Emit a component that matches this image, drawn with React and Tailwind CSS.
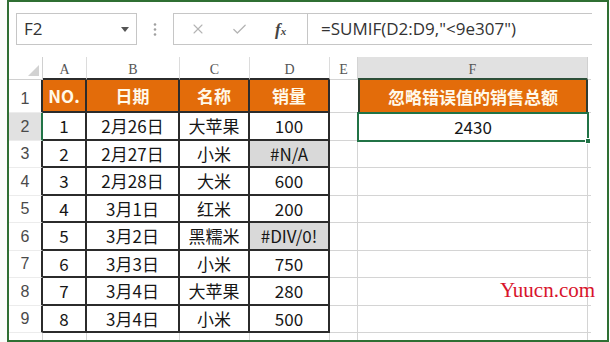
import React from "react";
import { X, Check } from "lucide-react";

const CJK = { fontFamily: '"Noto Sans CJK SC", "Noto Sans", sans-serif' };

const data = [
  ["1", "2月26日", "大苹果", "100"],
  ["2", "2月27日", "小米", "#N/A"],
  ["3", "2月28日", "大米", "600"],
  ["4", "3月1日", "红米", "200"],
  ["5", "3月2日", "黑糯米", "#DIV/0!"],
  ["6", "3月3日", "小米", "750"],
  ["7", "3月4日", "大苹果", "280"],
  ["8", "3月4日", "小米", "500"],
];

function RowNum({ n, selected }) {
  return (
    <div
      className={`flex items-end justify-center pb-[1px] border-r-2 border-b border-b-[#ececec] text-[16px] text-[#4a4a4a] ${
        selected ? "bg-[#e1e1e1] border-r-[#217346]" : "bg-white border-r-[#2b2b2b]"
      }`}
      style={{ fontFamily: '"Liberation Sans", sans-serif' }}
    >
      {n}
    </div>
  );
}

function Cell({ children, gray }) {
  return (
    <div
      className={`flex items-center justify-center border-r-2 border-b-2 border-[#2b2b2b] text-[17px] text-[#161616] ${
        gray ? "bg-[#d9d9d9]" : "bg-white"
      }`}
    >
      {children}
    </div>
  );
}

function ColHead({ children, className = "" }) {
  return (
    <div
      className={`flex items-center justify-center pt-[3px] text-[14px] text-[#555] ${className}`}
      style={{ fontFamily: '"Liberation Serif", serif' }}
    >
      {children}
    </div>
  );
}

export default function App() {
  return (
    <div className="relative w-[610px] h-[342px] bg-[#fbfdfb] overflow-hidden" style={CJK}>
      <div className="ml-[7px] w-[602px] h-[342px] border-2 border-[#2f6f33] bg-white">
        {/* formula bar */}
        <div className="flex items-center mt-[11px] ml-[7px] mr-[15px] h-[32px]">
          <div className="flex items-center justify-between w-[121px] h-full border border-[#c6c6c6] pl-[7px] pr-[7px]">
            <span className="text-[17px] text-[#333]" style={{ fontFamily: '"Open Sans", sans-serif' }}>
              F2
            </span>
            <svg width="8" height="5" viewBox="0 0 8 5">
              <path d="M0 0 L8 0 L4 5 Z" fill="#555" />
            </svg>
          </div>
          <div className="flex items-center justify-center w-[36px] h-full">
            <svg width="4" height="13" viewBox="0 0 4 13">
              <circle cx="2" cy="1.5" r="1.3" fill="#a0a0a0" />
              <circle cx="2" cy="6.5" r="1.3" fill="#a0a0a0" />
              <circle cx="2" cy="11.5" r="1.3" fill="#a0a0a0" />
            </svg>
          </div>
          <div className="flex items-center w-[135px] h-full border border-[#c6c6c6]">
            <X className="ml-[16px]" size={16} strokeWidth={1.6} color="#b4b4b4" />
            <Check className="ml-[25px]" size={17} strokeWidth={1.8} color="#b4b4b4" />
            <span
              className="ml-[27px] italic font-bold text-[17px] text-[#444] leading-none"
              style={{ fontFamily: '"Liberation Serif", serif' }}
            >
              f<span className="text-[11px]">x</span>
            </span>
          </div>
          <div className="flex items-center flex-1 h-full border-t border-b border-[#c6c6c6] pl-[13px]">
            <span className="text-[17px] text-[#333]" style={{ fontFamily: '"Open Sans", sans-serif' }}>
              =SUMIF(D2:D9,"&lt;9e307")
            </span>
          </div>
        </div>

        {/* sheet */}
        <div className="mt-[12px] grid grid-cols-[34px_44px_93px_70px_80px_28px_230px_3px] grid-rows-[23px_33px_28px_27px_28px_27px_28px_27px_28px_27px_7px]">
          {/* column headers */}
          <div className="relative border-r border-b border-[#d0d0d0] bg-white">
            <svg className="absolute right-[3px] bottom-[3px]" width="11" height="11" viewBox="0 0 11 11">
              <path d="M11 0 L11 11 L0 11 Z" fill="#d2d2d2" />
            </svg>
          </div>
          <ColHead className="border-r border-r-[#dcdcdc] border-b-2 border-b-[#2b2b2b]">A</ColHead>
          <ColHead className="border-r border-r-[#dcdcdc] border-b-2 border-b-[#2b2b2b]">B</ColHead>
          <ColHead className="border-r border-r-[#dcdcdc] border-b-2 border-b-[#2b2b2b]">C</ColHead>
          <ColHead className="border-r border-r-[#dcdcdc] border-b-2 border-b-[#2b2b2b]">D</ColHead>
          <ColHead className="border-r border-b border-[#d4d4d4]">E</ColHead>
          <ColHead className="bg-[#e1e1e1] border-r border-r-[#d0d0d0] border-b-2 border-b-[#2d4f38] text-[#1f6b3c]">F</ColHead>
          <div className="border-b border-[#d4d4d4]" />

          {/* row 1 */}
          <RowNum n="1" />
          {["NO.", "日期", "名称", "销量"].map((h) => (
            <div
              key={h}
              className="flex items-center justify-center bg-[#e36c0a] border-r-2 border-b-2 border-[#2b2b2b] text-[17px] font-bold text-[#fff9ea]"
            >
              {h}
            </div>
          ))}
          <div className="border-b border-[#d4d4d4]" />
          <div className="flex items-center justify-center bg-[#e36c0a] border-l-2 border-r-2 border-[#2f3a30] text-[17px] font-bold text-[#fff9ea]">
            忽略错误值的销售总额
          </div>
          <div className="border-b border-[#d4d4d4]" />

          {/* data rows */}
          {data.map((r, i) => (
            <React.Fragment key={i}>
              <RowNum n={String(i + 2)} selected={i === 0} />
              <Cell>{r[0]}</Cell>
              <Cell>{r[1]}</Cell>
              <Cell>{r[2]}</Cell>
              <Cell gray={r[3].startsWith("#")}>{r[3]}</Cell>
              <div className="border-r border-b border-[#d4d4d4]" />
              {i === 0 ? (
                <div className="relative flex items-center justify-center text-[17px] text-[#161616]">
                  2430
                  <div className="absolute -left-[1px] -top-[1px] -right-[1px] -bottom-[1px] border-2 border-[#217346]" />
                  <div className="absolute -right-[3px] -bottom-[3px] w-[6px] h-[6px] bg-[#217346] border border-white" />
                </div>
              ) : (
                <div className="border-r border-b border-[#d4d4d4]" />
              )}
              <div className="border-b border-[#d4d4d4]" />
            </React.Fragment>
          ))}

          {/* row 10 (partial) */}
          <div className="border-r border-[#d4d4d4]" />
          <div className="border-r border-[#d4d4d4]" />
          <div className="border-r border-[#d4d4d4]" />
          <div className="border-r border-[#d4d4d4]" />
          <div className="border-r border-[#d4d4d4]" />
          <div className="border-r border-[#d4d4d4]" />
          <div className="border-r border-[#d4d4d4]" />
          <div />
        </div>
      </div>

      {/* watermark */}
      <div
        className="absolute left-[500px] top-[275px] text-[21px] text-[#d8142c]"
        style={{ fontFamily: '"Liberation Serif", serif' }}
      >
        Yuucn.com
      </div>
    </div>
  );
}
